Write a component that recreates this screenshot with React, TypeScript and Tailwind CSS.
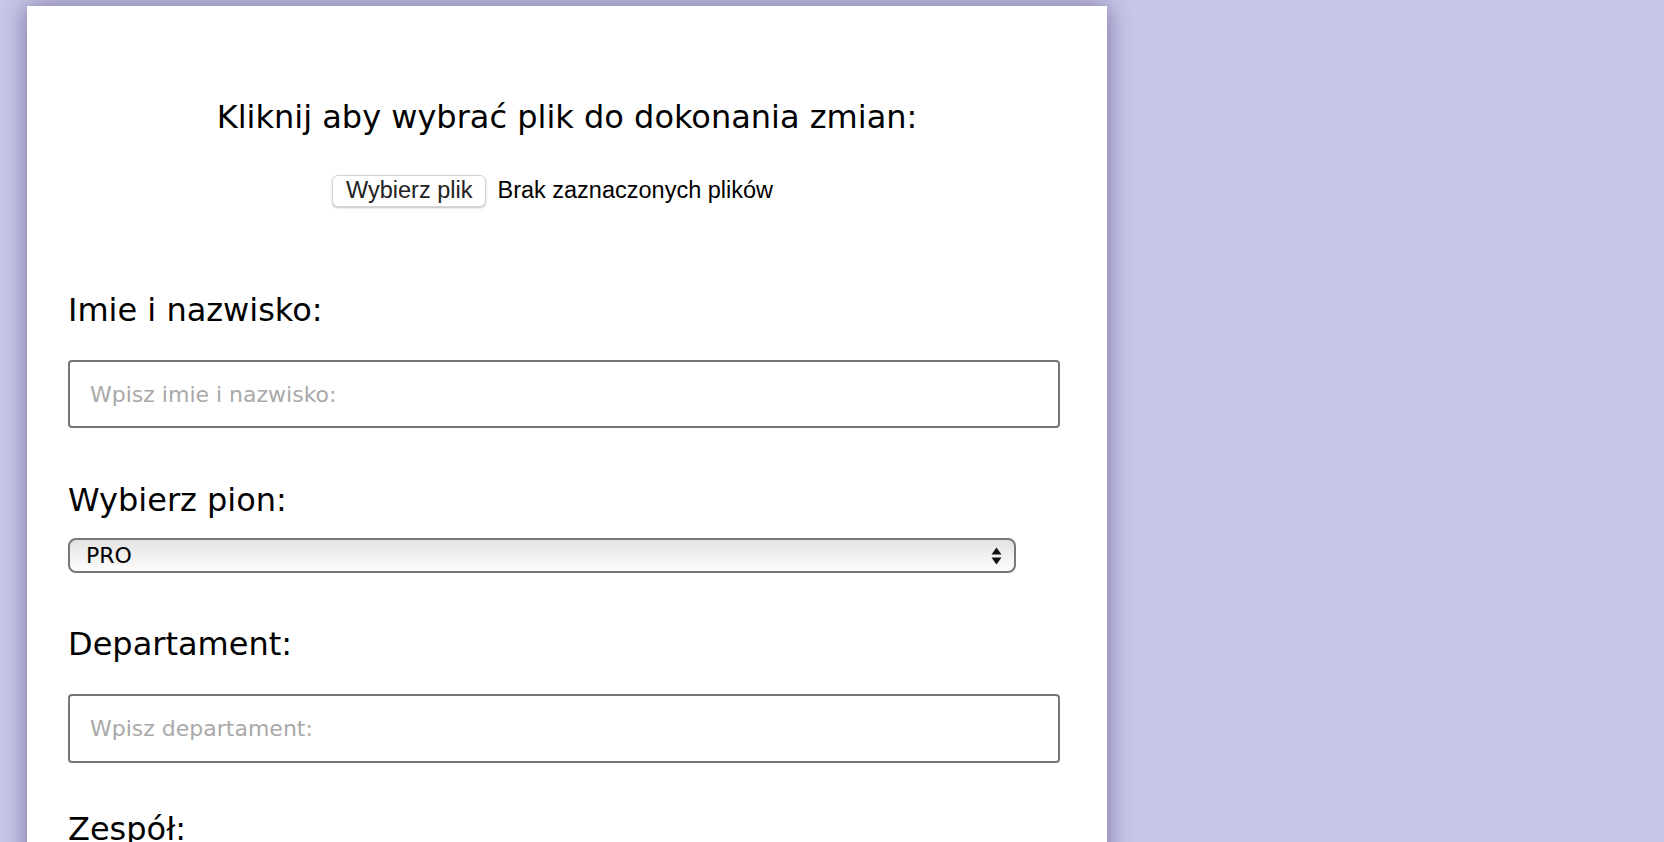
import React, { useState } from 'react';

const labelFont = { fontFamily: '"DejaVu Sans", Verdana, sans-serif' };

const App: React.FC = () => {
  const [name, setName] = useState('');
  const [pion, setPion] = useState('PRO');
  const [dept, setDept] = useState('');

  return (
    <div className="min-h-screen bg-[#c8c6e9] pl-[27px] pt-[6px] overflow-hidden" style={labelFont}>
      <div className="w-[1080px] min-h-[900px] bg-white shadow-[0_0_24px_rgba(40,30,80,0.5)] px-[41px] pt-[96px] text-black">
        <h2 className="text-center text-[32px] leading-[31px] font-normal">
          Kliknij aby wybrać plik do dokonania zmian:
        </h2>

        {/* file picker */}
        <div className="flex justify-center mt-[40px]">
          <label className="w-[470px] flex items-center gap-[11px] cursor-pointer font-['Liberation_Sans',Arial,sans-serif]">
            <span className="h-[32px] px-[13px] flex items-center bg-white border border-[#d4d4d4] rounded-[6px] shadow-[0_1px_2px_rgba(0,0,0,0.25)] text-[23.5px] text-[#222]">
              Wybierz plik
            </span>
            <span className="text-[23.5px]">Brak zaznaczonych plików</span>
            <input type="file" className="hidden" />
          </label>
        </div>

        {/* imie */}
        <label className="block mt-[87px] text-[32px] leading-[31px]">Imie i nazwisko:</label>
        <input
          type="text"
          value={name}
          onChange={(e) => setName(e.target.value)}
          placeholder="Wpisz imie i nazwisko:"
          className="block mt-[34px] w-[992px] h-[68px] border-2 border-[#767676] rounded-[4px] px-[20px] text-[22px] placeholder:text-[#a9a9a9] outline-none"
        />

        {/* pion */}
        <label className="block mt-[57px] text-[32px] leading-[31px]">Wybierz pion:</label>
        <div className="relative mt-[22px] w-[948px]">
          <select
            value={pion}
            onChange={(e) => setPion(e.target.value)}
            className="appearance-none block w-full h-[35px] border-2 border-[#777] rounded-[8px] pl-[16px] text-[22px] leading-[31px] bg-gradient-to-b from-[#e3e3e3] via-[#f0f0f0] to-[#fdfdfd] outline-none"
          >
            <option>PRO</option>
            <option>HR</option>
            <option>IT</option>
          </select>
          <svg
            className="absolute right-[14px] top-1/2 -translate-y-1/2 pointer-events-none"
            width="11"
            height="19"
            viewBox="0 0 11 19"
          >
            <path d="M5.5 1 L10.5 8 L0.5 8 Z" fill="#111" />
            <path d="M0.5 11 L10.5 11 L5.5 18 Z" fill="#111" />
          </svg>
        </div>

        {/* departament */}
        <label className="block mt-[56px] text-[32px] leading-[31px]">Departament:</label>
        <input
          type="text"
          value={dept}
          onChange={(e) => setDept(e.target.value)}
          placeholder="Wpisz departament:"
          className="block mt-[34px] w-[992px] h-[69px] border-2 border-[#767676] rounded-[4px] px-[20px] text-[22px] placeholder:text-[#a9a9a9] outline-none"
        />

        {/* zespol */}
        <label className="block mt-[51px] text-[32px] leading-[31px]">Zespół:</label>
      </div>
    </div>
  );
};

export default App;
